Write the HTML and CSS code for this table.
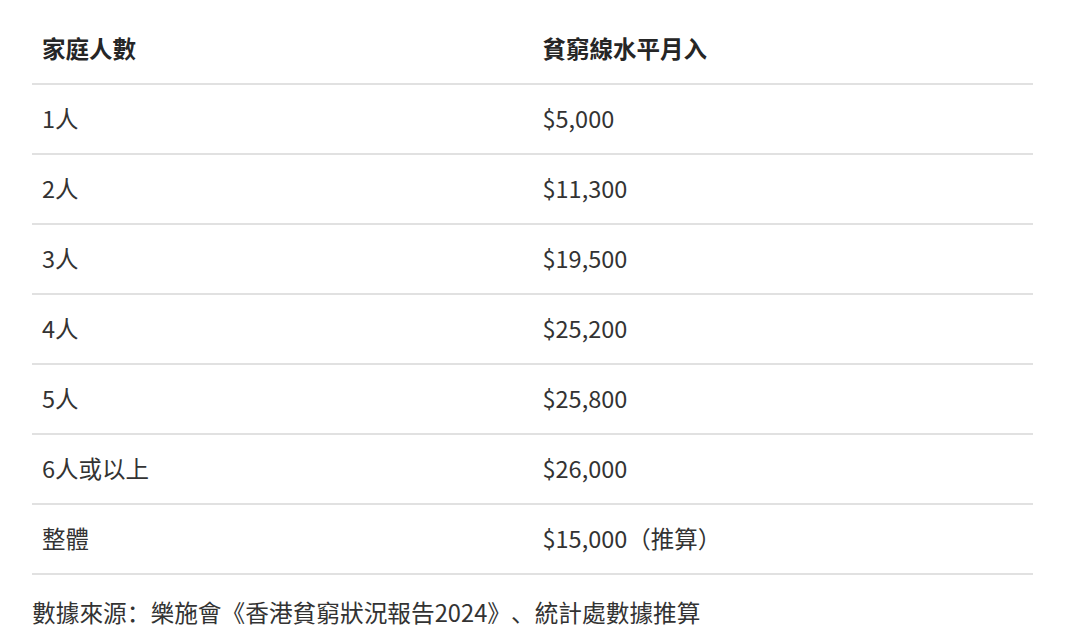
FILE: index.html
```html
<!DOCTYPE html>
<html lang="zh-CN">
<head>
<meta charset="utf-8">
<link rel="stylesheet" href="styles.css">
</head>
<body>
<div class="wrap">
  <table class="poverty">
    <thead>
      <tr><th>家庭人數</th><th>貧窮線水平月入</th></tr>
    </thead>
    <tbody>
      <tr><td>1人</td><td>$5,000</td></tr>
      <tr><td>2人</td><td>$11,300</td></tr>
      <tr><td>3人</td><td>$19,500</td></tr>
      <tr><td>4人</td><td>$25,200</td></tr>
      <tr><td>5人</td><td>$25,800</td></tr>
      <tr><td>6人或以上</td><td>$26,000</td></tr>
      <tr><td>整體</td><td>$15,000（推算）</td></tr>
    </tbody>
  </table>
  <p class="source">數據來源：樂施會《香港貧窮狀況報告2024》、統計處數據推算</p>
</div>
</body>
</html>
```
FILE: styles.css
```css
html, body {
  margin: 0;
  padding: 0;
  background: #fff;
}
body {
  font-family: "Noto Sans CJK SC", "Noto Sans CJK TC", "Noto Sans", sans-serif;
  color: #333;
  text-spacing-trim: space-all;
}
.wrap {
  padding: 15px 47px 0 32px;
}
.poverty {
  width: 1001px;
  border-collapse: collapse;
  table-layout: fixed;
}
.poverty th,
.poverty td {
  width: 50%;
  height: 68px;
  padding: 0 10px;
  text-align: left;
  font-size: 23.5px;
  line-height: 1.5;
  border-bottom: 2px solid #e1e1e1;
  vertical-align: middle;
}
.poverty th {
  font-weight: 700;
  color: #262626;
}
.source {
  margin: 20px 0 0;
  font-size: 23.7px;
  line-height: 1.5;
  color: #333;
}
```
